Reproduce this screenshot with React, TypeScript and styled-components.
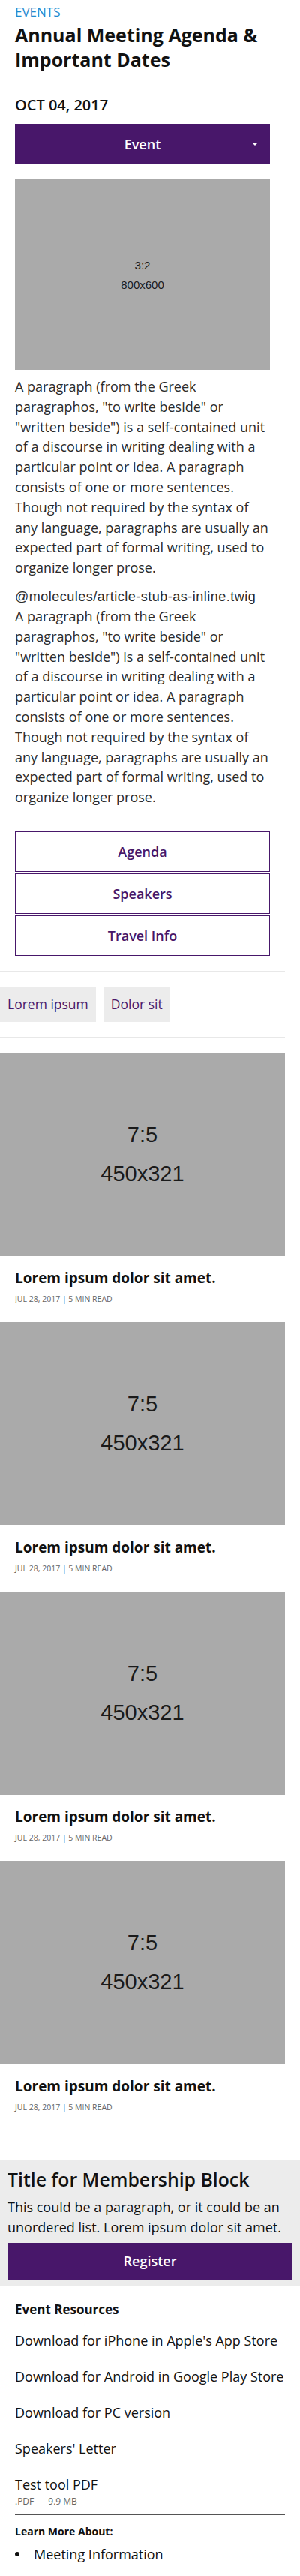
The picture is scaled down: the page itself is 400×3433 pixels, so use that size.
import React from 'react';
import styled, { createGlobalStyle } from 'styled-components';

const purple = '#48176a';

const GlobalStyle = createGlobalStyle`
  body {
    margin: 0;
    background: #fff;
    font-family: "Open Sans", "Noto Sans", sans-serif;
    color: #222;
  }
  * {
    box-sizing: border-box;
  }
`;

const Page = styled.div`
  width: 400px;
  padding-bottom: 20px;
`;

const Header = styled.header`
  padding: 5px 20px 0;
`;

const Eyebrow = styled.div`
  font-size: 17px;
  line-height: 22px;
  color: #1e8bd0;
  text-transform: uppercase;
`;

const Title = styled.h1`
  margin: 3px 0 0;
  font-size: 25px;
  line-height: 33px;
  font-weight: 700;
  color: #111;
`;

const DateLine = styled.div`
  margin-top: 32px;
  padding-bottom: 10px;
  border-bottom: 1px solid #555;
  font-size: 20px;
  line-height: 24px;
  font-weight: 600;
  color: #111;
`;

const Article = styled.section`
  padding: 0 40px 0 20px;
`;

const SelectButton = styled.button`
  position: relative;
  display: flex;
  align-items: center;
  justify-content: center;
  width: 100%;
  height: 53px;
  margin-top: 2px;
  border: 0;
  background: ${purple};
  color: #fff;
  font-family: inherit;
  font-size: 18px;
  font-weight: 600;
`;

const Caret = styled.span`
  position: absolute;
  right: 16px;
  top: 25px;
  width: 0;
  height: 0;
  border-left: 4px solid transparent;
  border-right: 4px solid transparent;
  border-top: 4px solid #fff;
`;

const Placeholder = styled.div<{ $h: number; $size: number; $gap: number }>`
  display: flex;
  flex-direction: column;
  align-items: center;
  justify-content: center;
  gap: ${(p) => p.$gap}px;
  height: ${(p) => p.$h}px;
  background: #aaa;
  color: #1a1a1a;
  font-family: "Liberation Sans", Arial, sans-serif;
  font-size: ${(p) => p.$size}px;
  line-height: 1;
`;

const HeroImage = styled(Placeholder)`
  margin-top: 21px;
`;

const Paragraph = styled.p`
  max-width: 339px;
  margin: 9px 0 0;
  font-size: 18px;
  line-height: 26.8px;
  color: #2b2b2b;
`;

const Stub = styled.div`
  max-width: 339px;
  margin-top: 13px;
  font-size: 18px;
  line-height: 26.8px;
  color: #2b2b2b;
`;

const StubPath = styled.div`
  font-family: "Liberation Sans", Arial, sans-serif;
  font-size: 18px;
  line-height: 25px;
  letter-spacing: 0.5px;
  white-space: nowrap;
`;

const StubText = styled.p`
  margin: 0;
`;

const LinkList = styled.div`
  display: flex;
  flex-direction: column;
  gap: 2px;
  margin-top: 32px;
`;

const OutlineButton = styled.a`
  display: flex;
  align-items: center;
  justify-content: center;
  height: 54px;
  border: 1.5px solid ${purple};
  color: ${purple};
  font-size: 18px;
  font-weight: 600;
  text-decoration: none;
`;

const Rule = styled.hr`
  width: 380px;
  margin: 20px 0 0;
  border: 0;
  border-top: 1px solid #e8e8e8;
`;

const Tags = styled.div`
  display: flex;
  gap: 10px;
  margin-top: 20px;
`;

const Tag = styled.a`
  display: flex;
  align-items: center;
  height: 47px;
  padding: 0 10px;
  background: #ececec;
  color: ${purple};
  font-size: 17.5px;
  text-decoration: none;
`;

const Cards = styled.div`
  width: 380px;
  margin-top: 20px;
`;

const Card = styled.article`
  height: 359px;
`;

const CardBody = styled.div`
  padding: 14px 20px 0;
`;

const CardTitle = styled.h3`
  margin: 0;
  font-size: 19px;
  line-height: 30px;
  font-weight: 700;
  color: #111;
`;

const CardMeta = styled.div`
  margin-top: 5px;
  font-size: 10.5px;
  line-height: 16px;
  color: #666;
  text-transform: uppercase;
`;

const Membership = styled.section`
  margin-top: 40px;
  padding: 10px 10px 9px;
  background: #ececec;
`;

const MembershipTitle = styled.h2`
  margin: 0;
  font-size: 24.8px;
  line-height: 31px;
  font-weight: 600;
  color: #111;
`;

const MembershipText = styled.p`
  margin: 8px 0 0;
  font-size: 18px;
  line-height: 27px;
  color: #111;
`;

const RegisterButton = styled.button`
  display: block;
  width: 100%;
  height: 49px;
  margin-top: 7px;
  border: 0;
  background: ${purple};
  color: #fff;
  font-family: inherit;
  font-size: 18px;
  font-weight: 600;
`;

const Resources = styled.section`
  padding: 0 20px;
`;

const ResourcesTitle = styled.h4`
  margin: 20px 0 0;
  padding-bottom: 5px;
  border-bottom: 1px solid #555;
  font-size: 17px;
  line-height: 22px;
  font-weight: 700;
  color: #111;
`;

const ResourceRow = styled.a<{ $tight?: boolean }>`
  display: block;
  padding: 12px 0 ${(p) => (p.$tight ? 10 : 11)}px;
  border-bottom: 1px solid #555;
  color: #111;
  font-size: 18px;
  line-height: 24px;
  text-decoration: none;
`;

const FileMeta = styled.div`
  display: flex;
  gap: 19px;
  margin-top: 3px;
  font-size: 12px;
  line-height: 15px;
  color: #666;
`;

const LearnTitle = styled.div`
  margin-top: 12px;
  font-size: 14px;
  line-height: 20px;
  font-weight: 700;
  color: #111;
`;

const Bullets = styled.ul`
  margin: 8px 0 0;
  padding: 0;
  list-style: none;
  font-size: 18px;
  line-height: 24px;
  color: #111;
`;

const Bullet = styled.li`
  display: flex;
  align-items: center;

  &::before {
    content: '';
    width: 6px;
    height: 6px;
    margin-right: 19px;
    border-radius: 50%;
    background: #111;
  }
`;

const para =
  'A paragraph (from the Greek paragraphos, "to write beside" or "written beside") is a self-contained unit of a discourse in writing dealing with a particular point or idea. A paragraph consists of one or more sentences. Though not required by the syntax of any language, paragraphs are usually an expected part of formal writing, used to organize longer prose.';

const cards = [1, 2, 3, 4];

const resources = [
  "Download for iPhone in Apple's App Store",
  'Download for Android in Google Play Store',
  'Download for PC version',
  "Speakers' Letter",
];

export default function App() {
  return (
    <Page>
      <GlobalStyle />
      <Header>
        <Eyebrow>Events</Eyebrow>
        <Title>Annual Meeting Agenda &amp; Important Dates</Title>
        <DateLine>OCT 04, 2017</DateLine>
      </Header>
      <Article>
        <SelectButton>
          Event
          <Caret />
        </SelectButton>
        <HeroImage $h={254} $size={15} $gap={11}>
          <span>3:2</span>
          <span>800x600</span>
        </HeroImage>
        <Paragraph>{para}</Paragraph>
        <Stub>
          <StubPath>@molecules/article-stub-as-inline.twig</StubPath>
          <StubText>{para}</StubText>
        </Stub>
        <LinkList>
          <OutlineButton href="#">Agenda</OutlineButton>
          <OutlineButton href="#">Speakers</OutlineButton>
          <OutlineButton href="#">Travel Info</OutlineButton>
        </LinkList>
      </Article>
      <Rule />
      <Tags>
        <Tag href="#">Lorem ipsum</Tag>
        <Tag href="#">Dolor sit</Tag>
      </Tags>
      <Rule />
      <Cards>
        {cards.map((n) => (
          <Card key={n}>
            <Placeholder $h={271} $size={29} $gap={23}>
              <span>7:5</span>
              <span>450x321</span>
            </Placeholder>
            <CardBody>
              <CardTitle>Lorem ipsum dolor sit amet.</CardTitle>
              <CardMeta>Jul 28, 2017 | 5 min read</CardMeta>
            </CardBody>
          </Card>
        ))}
      </Cards>
      <Membership>
        <MembershipTitle>Title for Membership Block</MembershipTitle>
        <MembershipText>
          This could be a paragraph, or it could be an unordered list. Lorem ipsum dolor sit amet.
        </MembershipText>
        <RegisterButton>Register</RegisterButton>
      </Membership>
      <Resources>
        <ResourcesTitle>Event Resources</ResourcesTitle>
        {resources.map((r) => (
          <ResourceRow href="#" key={r}>
            {r}
          </ResourceRow>
        ))}
        <ResourceRow href="#" $tight>
          Test tool PDF
          <FileMeta>
            <span>.PDF</span>
            <span>9.9 MB</span>
          </FileMeta>
        </ResourceRow>
        <LearnTitle>Learn More About:</LearnTitle>
        <Bullets>
          <Bullet>Meeting Information</Bullet>
        </Bullets>
      </Resources>
    </Page>
  );
}
